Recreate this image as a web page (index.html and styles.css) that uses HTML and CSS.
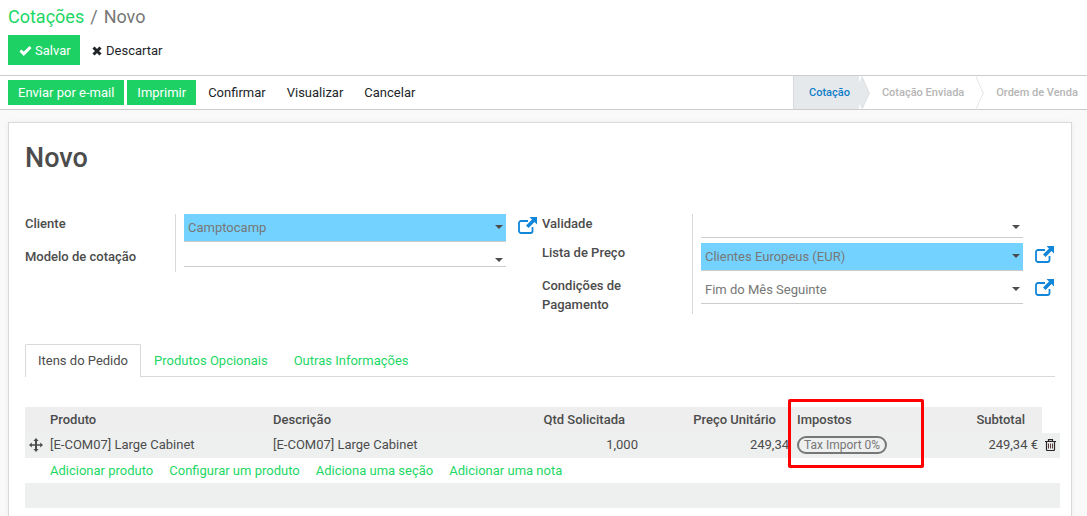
FILE: index.html
```html
<!DOCTYPE html>
<html lang="pt">
<head>
    <meta charset="UTF-8">
    <title>Cotações</title>
    <link rel="stylesheet" href="styles.css">
</head>
<body>
    <svg class="icon-defs" width="0" height="0">
        <symbol id="ext" viewBox="0 0 19 17">
            <path d="M14.500 10v4a2 2 0 0 1-2 2H3a2 2 0 0 1-2-2V6a2 2 0 0 1 2-2h7" fill="none" stroke="currentColor" stroke-width="1.800"/>
            <path d="M11.500 0H19v7.500L16.500 5l-6 6L8 8.500l6-6z" fill="currentColor"/>
        </symbol>
    </svg>

    <header class="control-panel">
        <div class="breadcrumb"><a>Cotações</a><span class="sep">/</span><span>Novo</span></div>
        <div class="main-buttons">
            <button class="btn btn-primary btn-save">
                <svg class="ico-check" viewBox="0 0 14 12"><path d="M1.500 6l3.600 3.600 7.400-7.500" fill="none" stroke="currentColor" stroke-width="3.200"/></svg>Salvar
            </button>
            <button class="btn btn-discard">
                <svg class="ico-x" viewBox="0 0 10 10"><path d="M1.500 1.500l7 7M8.500 1.500l-7 7" fill="none" stroke="currentColor" stroke-width="3"/></svg>Descartar
            </button>
        </div>
    </header>

    <div class="statusbar">
        <div class="actions">
            <button class="btn btn-primary btn-small">Enviar por e-mail</button>
            <button class="btn btn-primary btn-small">Imprimir</button>
            <button class="btn btn-plain">Confirmar</button>
            <button class="btn btn-plain">Visualizar</button>
            <button class="btn btn-plain">Cancelar</button>
        </div>
        <div class="steps">
            <span class="step current">Cotação</span>
            <span class="step">Cotação Enviada</span>
            <span class="step last">Ordem de Venda</span>
        </div>
    </div>

    <main class="sheet">
        <h1>Novo</h1>

        <div class="groups">
            <div class="group group-left">
                <div class="labels">
                    <label class="lbl lbl-cliente">Cliente</label>
                    <label class="lbl lbl-modelo">Modelo de cotação</label>
                </div>
                <div class="fields">
                    <div class="field-row">
                        <div class="field field-tall filled"><span>Camptocamp</span><i class="caret"></i></div>
                        <svg class="ext"><use href="#ext"/></svg>
                    </div>
                    <div class="field-row">
                        <div class="field field-short"><i class="caret"></i></div>
                    </div>
                </div>
            </div>
            <div class="group group-right">
                <div class="labels">
                    <label class="lbl lbl-validade">Validade</label>
                    <label class="lbl lbl-lista">Lista de Preço</label>
                    <label class="lbl lbl-cond">Condições de Pagamento</label>
                </div>
                <div class="fields">
                    <div class="field-row">
                        <div class="field field-validade"><i class="caret"></i></div>
                    </div>
                    <div class="field-row">
                        <div class="field field-tall filled"><span>Clientes Europeus (EUR)</span><i class="caret"></i></div>
                        <svg class="ext"><use href="#ext"/></svg>
                    </div>
                    <div class="field-row">
                        <div class="field field-cond"><span>Fim do Mês Seguinte</span><i class="caret"></i></div>
                        <svg class="ext"><use href="#ext"/></svg>
                    </div>
                </div>
            </div>
        </div>

        <nav class="tabs">
            <a class="tab active">Itens do Pedido</a>
            <a class="tab">Produtos Opcionais</a>
            <a class="tab">Outras Informações</a>
        </nav>

        <section class="lines">
            <div class="highlight"></div>
            <div class="line line-head">
                <span class="c-handle"></span>
                <span class="c-prod">Produto</span>
                <span class="c-desc">Descrição</span>
                <span class="c-qty">Qtd Solicitada</span>
                <span class="c-price">Preço Unitário</span>
                <span class="c-tax">Impostos</span>
                <span class="c-sub">Subtotal</span>
            </div>
            <div class="line line-row">
                <span class="c-handle">
                    <svg viewBox="0 0 14 14" width="14" height="14"><path d="M7 0l2.600 3H8v3.200h3.200V4.400L14 7l-2.800 2.600V7.800H8V11h1.600L7 14l-2.600-3H6V7.800H2.800v1.800L0 7l2.800-2.600v1.800H6V3H4.400z" fill="#4c4c4c"/></svg>
                </span>
                <span class="c-prod">[E-COM07] Large Cabinet</span>
                <span class="c-desc">[E-COM07] Large Cabinet</span>
                <span class="c-qty">1,000</span>
                <span class="c-price">249,34</span>
                <span class="c-tax"><span class="tag">Tax Import 0%</span></span>
                <span class="c-sub">249,34 €</span>
                <svg class="trash" viewBox="0 0 11 12" width="11" height="12"><path d="M0 2.500h11M3.500 2.500V.6h4v1.900M1.500 2.500v8a1 1 0 0 0 1 1h6a1 1 0 0 0 1-1v-8" fill="none" stroke="#2b2426" stroke-width="1.200"/><path d="M3.500 4.500v5M5.500 4.500v5M7.500 4.500v5" fill="none" stroke="#5a3a3a" stroke-width="1"/></svg>
            </div>
            <div class="add-links">
                <a>Adicionar produto</a>
                <a>Configurar um produto</a>
                <a>Adiciona uma seção</a>
                <a>Adicionar uma nota</a>
            </div>
            <div class="line-foot"></div>
        </section>
    </main>
</body>
</html>
```
FILE: styles.css
```css
html, body {
    margin: 0;
    padding: 0;
    height: 516px;
    overflow: hidden;
}

body {
    font-family: Roboto, "Liberation Sans", sans-serif;
    font-size: 13px;
    line-height: 1.5;
    color: #4c4c4c;
    background-color: #f9f9f9;
}

.icon-defs {
    position: absolute;
}

a {
    color: #1dd765;
}

/* painel superior */
.control-panel {
    height: 75px;
    padding: 0 8px;
    background-color: #fff;
    border-bottom: 1px solid #ccc;
    box-sizing: content-box;
}

.breadcrumb {
    height: 35px;
    font-size: 18px;
    line-height: 34px;
    color: #777;
}

.breadcrumb .sep {
    margin: 0 6px;
}

.main-buttons {
    display: flex;
}

.btn {
    border: 0;
    padding: 0;
    background: none;
    font: inherit;
    color: #212529;
    display: flex;
    align-items: center;
}

.btn-primary {
    background-color: #1dd165;
    color: #fff;
}

.btn-save {
    width: 72px;
    height: 30px;
    padding: 1px 0 0 11px;
}

.ico-check {
    width: 13px;
    height: 11px;
    margin-right: 3px;
}

.btn-discard {
    height: 30px;
    margin-left: 12px;
    padding-top: 1px;
}

.ico-x {
    width: 10px;
    height: 10px;
    margin-right: 4px;
}

/* barra de status */
.statusbar {
    height: 33px;
    display: flex;
    justify-content: space-between;
    background-color: #fff;
    border-bottom: 1px solid #ccc;
}

.actions {
    display: flex;
    align-items: flex-start;
    padding: 4px 0 0 8px;
}

.btn-small {
    height: 25px;
    padding: 0 10px;
    margin-right: 3px;
}

.btn-plain {
    height: 25px;
    margin-left: 9px;
    margin-right: 12px;
}

.steps {
    display: flex;
    width: 294px;
    font-size: 11px;
    font-weight: 500;
    line-height: 33px;
    color: #b5b5b5;
}

.step {
    position: relative;
    padding-left: 23px;
    padding-right: 9px;
    white-space: nowrap;
}

.step.current {
    padding-left: 15px;
    padding-right: 9px;
    color: #0f7ec9;
    background-color: #e6e9ec;
    border-left: 1px solid #d8dadd;
}

.step::after {
    content: "";
    position: absolute;
    top: 5px;
    right: -15px;
    width: 23px;
    height: 23px;
    transform: scaleX(0.45) rotate(45deg);
    border-top: 1px solid #d8d8d8;
    border-right: 1px solid #d8d8d8;
    background-color: #fff;
    z-index: 1;
}

.step.current::after {
    background-color: #e6e9ec;
}

.step.last {
    padding-left: 23px;
    padding-right: 0;
}

.step.last::after {
    display: none;
}

/* folha */
.sheet {
    position: relative;
    width: 1030px;
    height: 400px;
    margin: 12px 0 0 8px;
    padding: 0 16px;
    background-color: #fff;
    border: 1px solid #d9d9d9;
    box-shadow: 0 0 6px rgba(0, 0, 0, 0.05);
}

h1 {
    margin: 0;
    padding-top: 17px;
    height: 75px;
    box-sizing: border-box;
    font-size: 27px;
    font-weight: 500;
    line-height: 36px;
    color: #4c4c4c;
}

.groups {
    display: flex;
    height: 101px;
    margin-top: 16px;
}

.group {
    display: flex;
    align-items: flex-start;
}

.group-left {
    width: 517px;
}

.group-right {
    flex: 1;
}

.labels {
    box-sizing: border-box;
    width: 151px;
    border-right: 1px solid #d9d9d9;
    font-weight: 500;
    color: #4c4c4c;
}

.group-left .labels {
    height: 58px;
}

.group-right .labels {
    width: 151px;
    height: 100px;
}

.lbl {
    display: block;
    line-height: 19px;
}

.lbl-modelo {
    margin-top: 14px;
}

.lbl-lista {
    margin-top: 10px;
}

.lbl-cond {
    margin-top: 14px;
    width: 100px;
}

.fields {
    padding-left: 8px;
}

.field-row {
    display: flex;
    align-items: flex-start;
}

.field {
    position: relative;
    width: 322px;
    box-sizing: border-box;
    padding-left: 4px;
    border-bottom: 1px solid #ccc;
    color: #777;
}

.field span {
    display: block;
}

.field .caret {
    position: absolute;
    right: 3px;
    width: 0;
    height: 0;
    border-left: 4px solid transparent;
    border-right: 4px solid transparent;
    border-top: 4px solid #4c4c4c;
}

.field-tall {
    height: 28px;
    line-height: 27px;
}

.field-tall .caret {
    top: 11px;
}

.filled {
    background-color: #73d2ff;
}

.field-short {
    height: 25px;
}

.field-short .caret {
    top: 16px;
}

.field-validade {
    height: 24px;
    margin-bottom: 5px;
}

.field-validade .caret {
    top: 11px;
}

.group-right .filled {
    margin-bottom: 5px;
}

.field-cond {
    height: 28px;
    line-height: 28px;
}

.field-cond .caret {
    top: 11px;
}

.ext {
    width: 19px;
    height: 17px;
    margin-left: 12px;
    margin-top: 3px;
    color: #1286d8;
}

/* abas */
.tabs {
    display: flex;
    height: 32px;
    margin-top: 29px;
    border-bottom: 1px solid #d9d9d9;
}

.tab {
    padding: 0 12px;
    line-height: 32px;
    height: 33px;
    box-sizing: border-box;
    border: 1px solid transparent;
    border-bottom: 0;
}

.tab.active {
    background-color: #fff;
    color: #4c4c4c;
    border-color: #d9d9d9;
    border-radius: 2px 2px 0 0;
}

/* linhas do pedido */
.lines {
    position: relative;
    margin-top: 30px;
}

.highlight {
    position: absolute;
    left: 763px;
    top: -8px;
    width: 130px;
    height: 63px;
    border: 3px solid #f00;
    border-radius: 2px;
    z-index: 2;
}

.line {
    display: flex;
    align-items: center;
    white-space: nowrap;
}

.line-head {
    width: 1017px;
    height: 26px;
    background-color: #eee;
    font-weight: 500;
}

.line-row {
    width: 1035px;
    height: 25px;
    padding-bottom: 2px;
    box-sizing: border-box;
    background-color: #eef0f0;
}

.c-handle {
    width: 25px;
    display: flex;
    padding-left: 4px;
    box-sizing: border-box;
}

.c-prod {
    width: 223px;
}

.c-desc {
    width: 223px;
}

.c-qty {
    width: 142px;
    box-sizing: border-box;
    text-align: right;
}

.c-price {
    width: 151px;
    box-sizing: border-box;
    text-align: right;
}

.c-tax {
    width: 176px;
    padding-left: 8px;
    box-sizing: border-box;
    display: flex;
}

.c-sub {
    width: 73px;
    box-sizing: border-box;
    text-align: right;
}

/* no cabecalho os numeros ficam mais para dentro */
.line-head .c-qty,
.line-head .c-price,
.line-head .c-sub {
    padding-right: 13px;
}

.tag {
    border: 2px solid #777;
    border-radius: 10px;
    padding: 0 5px;
    font-size: 12px;
    line-height: 14px;
    color: #777;
}

.trash {
    margin-left: 7px;
}

.add-links {
    display: flex;
    gap: 16px;
    height: 25px;
    padding-left: 25px;
    line-height: 25px;
}

.line-foot {
    width: 1035px;
    height: 25px;
    background-color: #eef0f0;
}
```
